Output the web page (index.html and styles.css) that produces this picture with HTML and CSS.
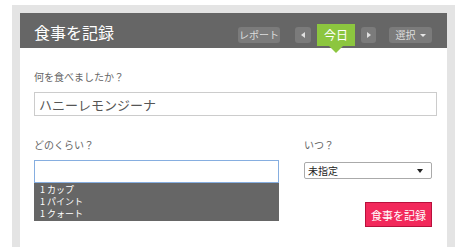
FILE: index.html
```html
<!DOCTYPE html>
<html lang="ja">
  <head>
    <meta charset="UTF-8" />
    <title>食事を記録</title>
    <link rel="stylesheet" href="styles.css">
  </head>
  <body>
    <section class="frame">
      <header class="kopf">
        <h1>食事を記録</h1>
        <nav class="steuer">
          <button class="knap rapport">レポート</button>
          <button class="knap pil venstre"><span></span></button>
          <button class="idag">今日</button>
          <button class="knap pil hoejre"><span></span></button>
          <button class="knap vaelg">選択 <span class="ned"></span></button>
        </nav>
      </header>

      <main class="panel">
        <p class="etiket">何を食べましたか？</p>
        <input class="felt navn" type="text" value="ハニーレモンジーナ" />

        <div class="raekke">
          <div class="kol">
            <p class="etiket">どのくらい？</p>
            <input class="felt maengde" type="text" value="" />
            <ul class="forslag">
              <li>1 カップ</li>
              <li>1 パイント</li>
              <li>1 クォート</li>
            </ul>
          </div>
          <div class="kol hoejrekol">
            <p class="etiket">いつ？</p>
            <div class="valg">
              <span>未指定</span>
              <span class="trekant"></span>
            </div>
            <button class="gem">食事を記録</button>
          </div>
        </div>
      </main>
    </section>
  </body>
</html>
```

FILE: styles.css
```css
body {
  margin: 0;
  padding: 0;
  background-color: #ffffff;
  font-family: "Noto Sans CJK JP", "Liberation Sans", sans-serif;
}

.frame {
  margin: 5px 7px 0 12px;
  padding: 8px 8px 0 8px;
  background-color: #e4e4e4;
}

.kopf {
  display: flex;
  justify-content: space-between;
  align-items: flex-start;
  height: 35px;
  padding: 0 15px 0 14px;
  background-color: #666666;
}

h1 {
  margin: 8px 0 0 0;
  font-size: 16px;
  line-height: 22px;
  font-weight: 400;
  color: #ffffff;
}

.steuer {
  display: flex;
  align-items: flex-start;
  margin-top: 11px;
}

button {
  font-family: "Noto Sans CJK JP", "Liberation Sans", sans-serif;
  border: none;
  padding: 0;
  cursor: pointer;
}

.knap {
  height: 16px;
  margin-top: 3px;
  background-color: #7b7b7b;
  color: #dddddd;
  font-size: 10px;
  line-height: 16px;
  border-radius: 3px;
}

.rapport {
  width: 42px;
  margin-right: 15px;
}

.pil {
  width: 16px;
  display: flex;
  align-items: center;
  justify-content: center;
}

.pil span {
  width: 0;
  height: 0;
  border-top: 3px solid transparent;
  border-bottom: 3px solid transparent;
}

.venstre span {
  border-right: 4px solid #e0e0e0;
}

.hoejre span {
  border-left: 4px solid #e0e0e0;
}

.venstre {
  margin-right: 6px;
}

.hoejre {
  width: 15px;
  margin-left: 6px;
  margin-right: 13px;
}

.idag {
  position: relative;
  width: 38px;
  height: 22px;
  background-color: #8cc63f;
  color: #ffffff;
  font-size: 12px;
  line-height: 22px;
}

.idag::after {
  content: "";
  position: absolute;
  left: 12px;
  top: 22px;
  border-left: 7px solid transparent;
  border-right: 7px solid transparent;
  border-top: 7px solid #8cc63f;
}

.vaelg {
  width: 43px;
  display: flex;
  align-items: center;
  justify-content: center;
  gap: 4px;
}

.ned {
  width: 0;
  height: 0;
  border-left: 3px solid transparent;
  border-right: 3px solid transparent;
  border-top: 3px solid #e6e6e6;
}

.panel {
  background-color: #ffffff;
  padding: 22px 10px 0 14px;
  height: 199px;
  box-sizing: border-box;
}

.etiket {
  margin: 0;
  font-size: 10px;
  line-height: 14px;
  color: #666666;
}

.felt {
  display: block;
  box-sizing: border-box;
  width: 100%;
  margin: 8px 0 0 0;
  padding: 0 4px;
  border: 1px solid #cccccc;
  font-family: "Noto Sans CJK JP", "Liberation Sans", sans-serif;
  outline: none;
}

.navn {
  height: 24px;
  font-size: 13px;
  color: #555555;
}

.raekke {
  display: grid;
  grid-template-columns: 245px 128px;
  column-gap: 25px;
  margin-top: 22px;
}

.maengde {
  height: 23px;
  border-color: #86aee0;
}

.forslag {
  list-style: none;
  margin: 0;
  padding: 1px 0 1px 6px;
  background-color: #666666;
  color: #ffffff;
  font-size: 9px;
  line-height: 12px;
}

.hoejrekol {
  display: flex;
  flex-direction: column;
}

.valg {
  display: flex;
  justify-content: space-between;
  align-items: center;
  box-sizing: border-box;
  height: 17px;
  margin-top: 10px;
  padding: 0 8px 0 3px;
  border: 1px solid #aaaaaa;
  border-radius: 2px;
  font-size: 10px;
  color: #222222;
}

.trekant {
  width: 0;
  height: 0;
  border-left: 3px solid transparent;
  border-right: 3px solid transparent;
  border-top: 4px solid #222222;
}

.gem {
  align-self: flex-end;
  width: 67px;
  height: 25px;
  margin-top: 23px;
  background-color: #f2295b;
  border: 1px solid #b8103c;
  color: #ffffff;
  font-size: 11px;
}
```
